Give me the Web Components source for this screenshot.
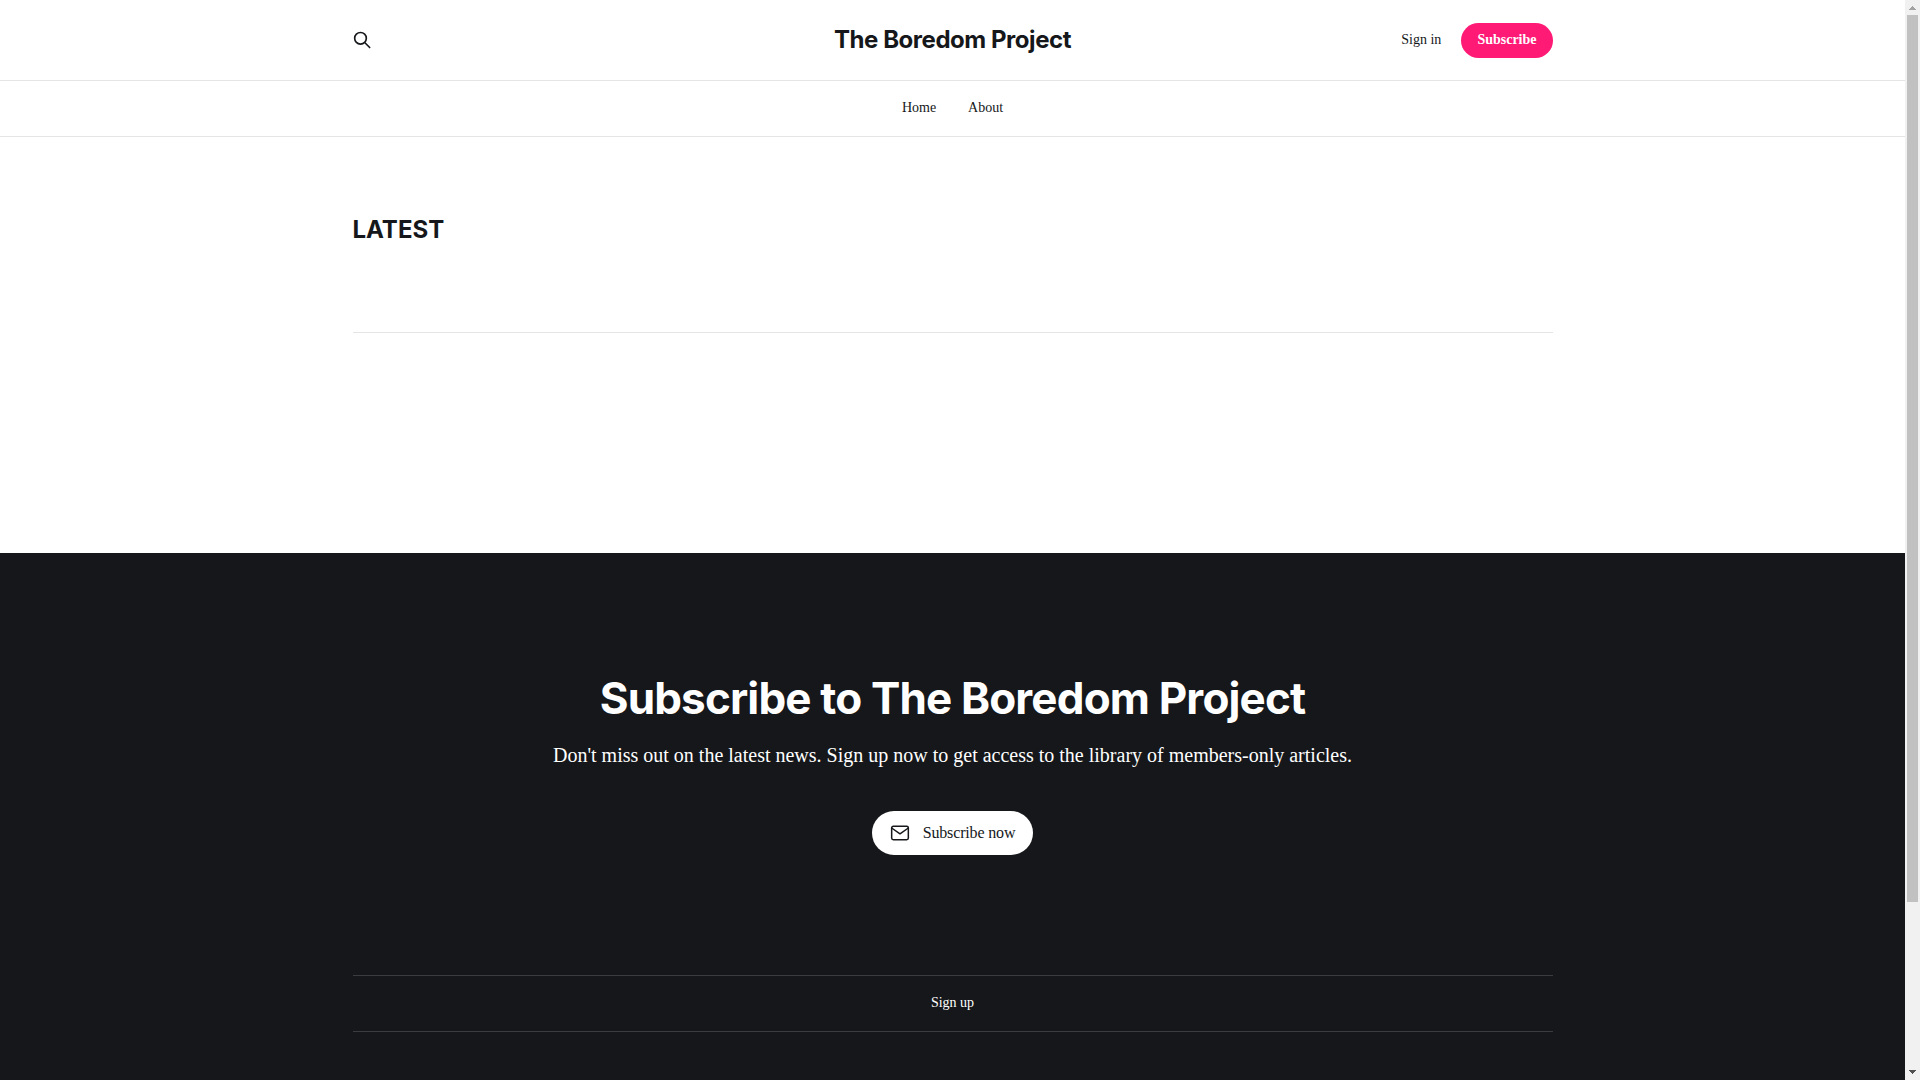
<!DOCTYPE html>
<html lang="en">
<head>
<meta charset="utf-8">
<title>The Boredom Project</title>
<style>
  body {
    margin: 0;
    display: flex;
    height: 100vh;
    overflow: hidden;
    background: #fff;
    color: #15171a;
    font-family: "Liberation Serif", "Times New Roman", serif;
    --accent: #ff1a75;
    --dark: #15171a;
    --line: #e5e5e5;
    --heading: Inter, "Liberation Sans", sans-serif;
    --content: 1200px;
  }
</style>
</head>
<body>
<blog-page>
  <site-header></site-header>
  <post-feed heading="Latest"></post-feed>
  <site-footer></site-footer>
</blog-page>
<page-scrollbar></page-scrollbar>
<script>
  function define(name, markup) {
    const template = document.createElement('template');
    template.innerHTML = markup;
    customElements.define(name, class extends HTMLElement {
      constructor() {
        super();
        this.attachShadow({ mode: 'open' }).append(template.content.cloneNode(true));
      }
      connectedCallback() {
        const title = this.shadowRoot.querySelector('[data-heading]');
        if (title) title.textContent = this.getAttribute('heading');
      }
    });
  }

  define('blog-page', `
    <style>
      :host { display: flex; flex-direction: column; flex: 1; min-width: 0; overflow: hidden; }
    </style>
    <slot></slot>`);

  define('nav-link', `
    <style>
      :host { display: block; font-size: 14px; line-height: 20px; }
      a { color: inherit; text-decoration: none; }
    </style>
    <a href="#"><slot></slot></a>`);

  define('pill-button', `
    <style>
      :host { display: block; }
      button {
        display: flex; align-items: center; gap: 13px;
        height: 44px; padding: 0 18px; border: 0; border-radius: 22px;
        background: #fff; color: #15171a; cursor: pointer;
        font: 400 16px/24px "Liberation Serif", serif; letter-spacing: -0.01em;
      }
      :host([kind="accent"]) button {
        height: 35px; padding: 0 16px; background: var(--accent); color: #fff;
        font-size: 14px; line-height: 20px; font-weight: 700; letter-spacing: normal;
      }
    </style>
    <button type="button"><slot name="icon"></slot><span><slot></slot></span></button>`);

  define('site-header', `
    <style>
      :host { display: block; flex: none; }
      .bar { height: 80px; border-bottom: 1px solid var(--line); }
      .inner {
        display: grid; grid-template-columns: 1fr auto 1fr; align-items: center;
        max-width: var(--content); height: 100%; margin: 0 auto;
      }
      .search { display: flex; justify-self: start; padding: 0; border: 0; background: none; color: inherit; cursor: pointer; }
      .logo {
        color: inherit; text-decoration: none; white-space: nowrap;
        font: 700 24px/32px var(--heading); letter-spacing: -0.019em;
      }
      .actions { display: flex; align-items: center; justify-self: end; gap: 20px; }
      nav {
        display: flex; justify-content: center; gap: 32px;
        padding: 17px 0 18px; border-bottom: 1px solid var(--line);
      }
    </style>
    <div class="bar"><div class="inner">
      <button class="search" type="button" aria-label="Search this site">
        <svg width="20" height="20" viewBox="1 0 24 24" fill="none" stroke="currentColor" stroke-width="2" stroke-linecap="round" stroke-linejoin="round"><path d="M21 21l-6-6m2-5a7 7 0 11-14 0 7 7 0 0114 0z"/></svg>
      </button>
      <a class="logo" href="#">The Boredom Project</a>
      <div class="actions">
        <nav-link>Sign in</nav-link>
        <pill-button kind="accent">Subscribe</pill-button>
      </div>
    </div></div>
    <nav aria-label="Main"><nav-link>Home</nav-link><nav-link>About</nav-link></nav>`);

  define('post-feed', `
    <style>
      :host { display: block; flex: none; padding: 77px 0 220px; }
      section { max-width: var(--content); margin: 0 auto; border-bottom: 1px solid var(--line); padding-bottom: 86px; }
      h2 { margin: 0; font: 700 24px/32px var(--heading); text-transform: uppercase; }
    </style>
    <section><h2 data-heading></h2></section>`);

  define('site-footer', `
    <style>
      :host { display: block; flex: 1 0 auto; background: var(--dark); color: #fff; }
      .inner { max-width: var(--content); margin: 0 auto; }
      .signup { display: flex; flex-direction: column; align-items: center; padding: 120px 0; text-align: center; }
      h2 { margin: 0; font: 700 44px/50px var(--heading); letter-spacing: -0.019em; }
      p { margin: 16px 0 40px; font-size: 20px; line-height: 32px; }
      nav {
        display: flex; justify-content: center; padding: 17px 0 18px;
        border-top: 1px solid #3b3c3f; border-bottom: 1px solid #3b3c3f;
      }
    </style>
    <div class="inner">
      <section class="signup">
        <h2>Subscribe to The Boredom Project</h2>
        <p>Don't miss out on the latest news. Sign up now to get access to the library of members-only articles.</p>
        <pill-button>
          <svg slot="icon" width="20" height="20" viewBox="0 0 20 20" fill="none" stroke="currentColor" stroke-width="1.5" stroke-linecap="round" stroke-linejoin="round"><path d="M3.333 3.333h13.334c.916 0 1.666.75 1.666 1.667v10c0 .917-.75 1.667-1.666 1.667H3.333c-.916 0-1.666-.75-1.666-1.667V5c0-.917.75-1.667 1.666-1.667z"/><path d="M18.333 5L10 10.833 1.667 5"/></svg>
          Subscribe now
        </pill-button>
      </section>
      <nav aria-label="Footer"><nav-link>Sign up</nav-link></nav>
    </div>`);

  define('page-scrollbar', `
    <style>
      :host {
        display: flex; flex-direction: column; align-items: center; flex: none;
        width: 15px; background: #f1f1f1;
      }
      svg { display: block; flex: none; }
      .track { display: flex; flex-direction: column; flex: 1; width: 11px; }
      .thumb { height: 84.5%; background: #c1c1c1; }
    </style>
    <svg width="15" height="15" viewBox="0 0 15 15" fill="#a3a3a3" shape-rendering="crispEdges"><path d="M7 6h1v1h1v1h1v1h1v1H4V9h1V8h1V7h1z"/></svg>
    <div class="track"><div class="thumb"></div></div>
    <svg width="15" height="15" viewBox="0 0 15 15" fill="#505050" shape-rendering="crispEdges"><path d="M4 5h7v1h-1v1H9v1H8v1H7V8H6V7H5V6H4z"/></svg>`);
</script>
</body>
</html>
